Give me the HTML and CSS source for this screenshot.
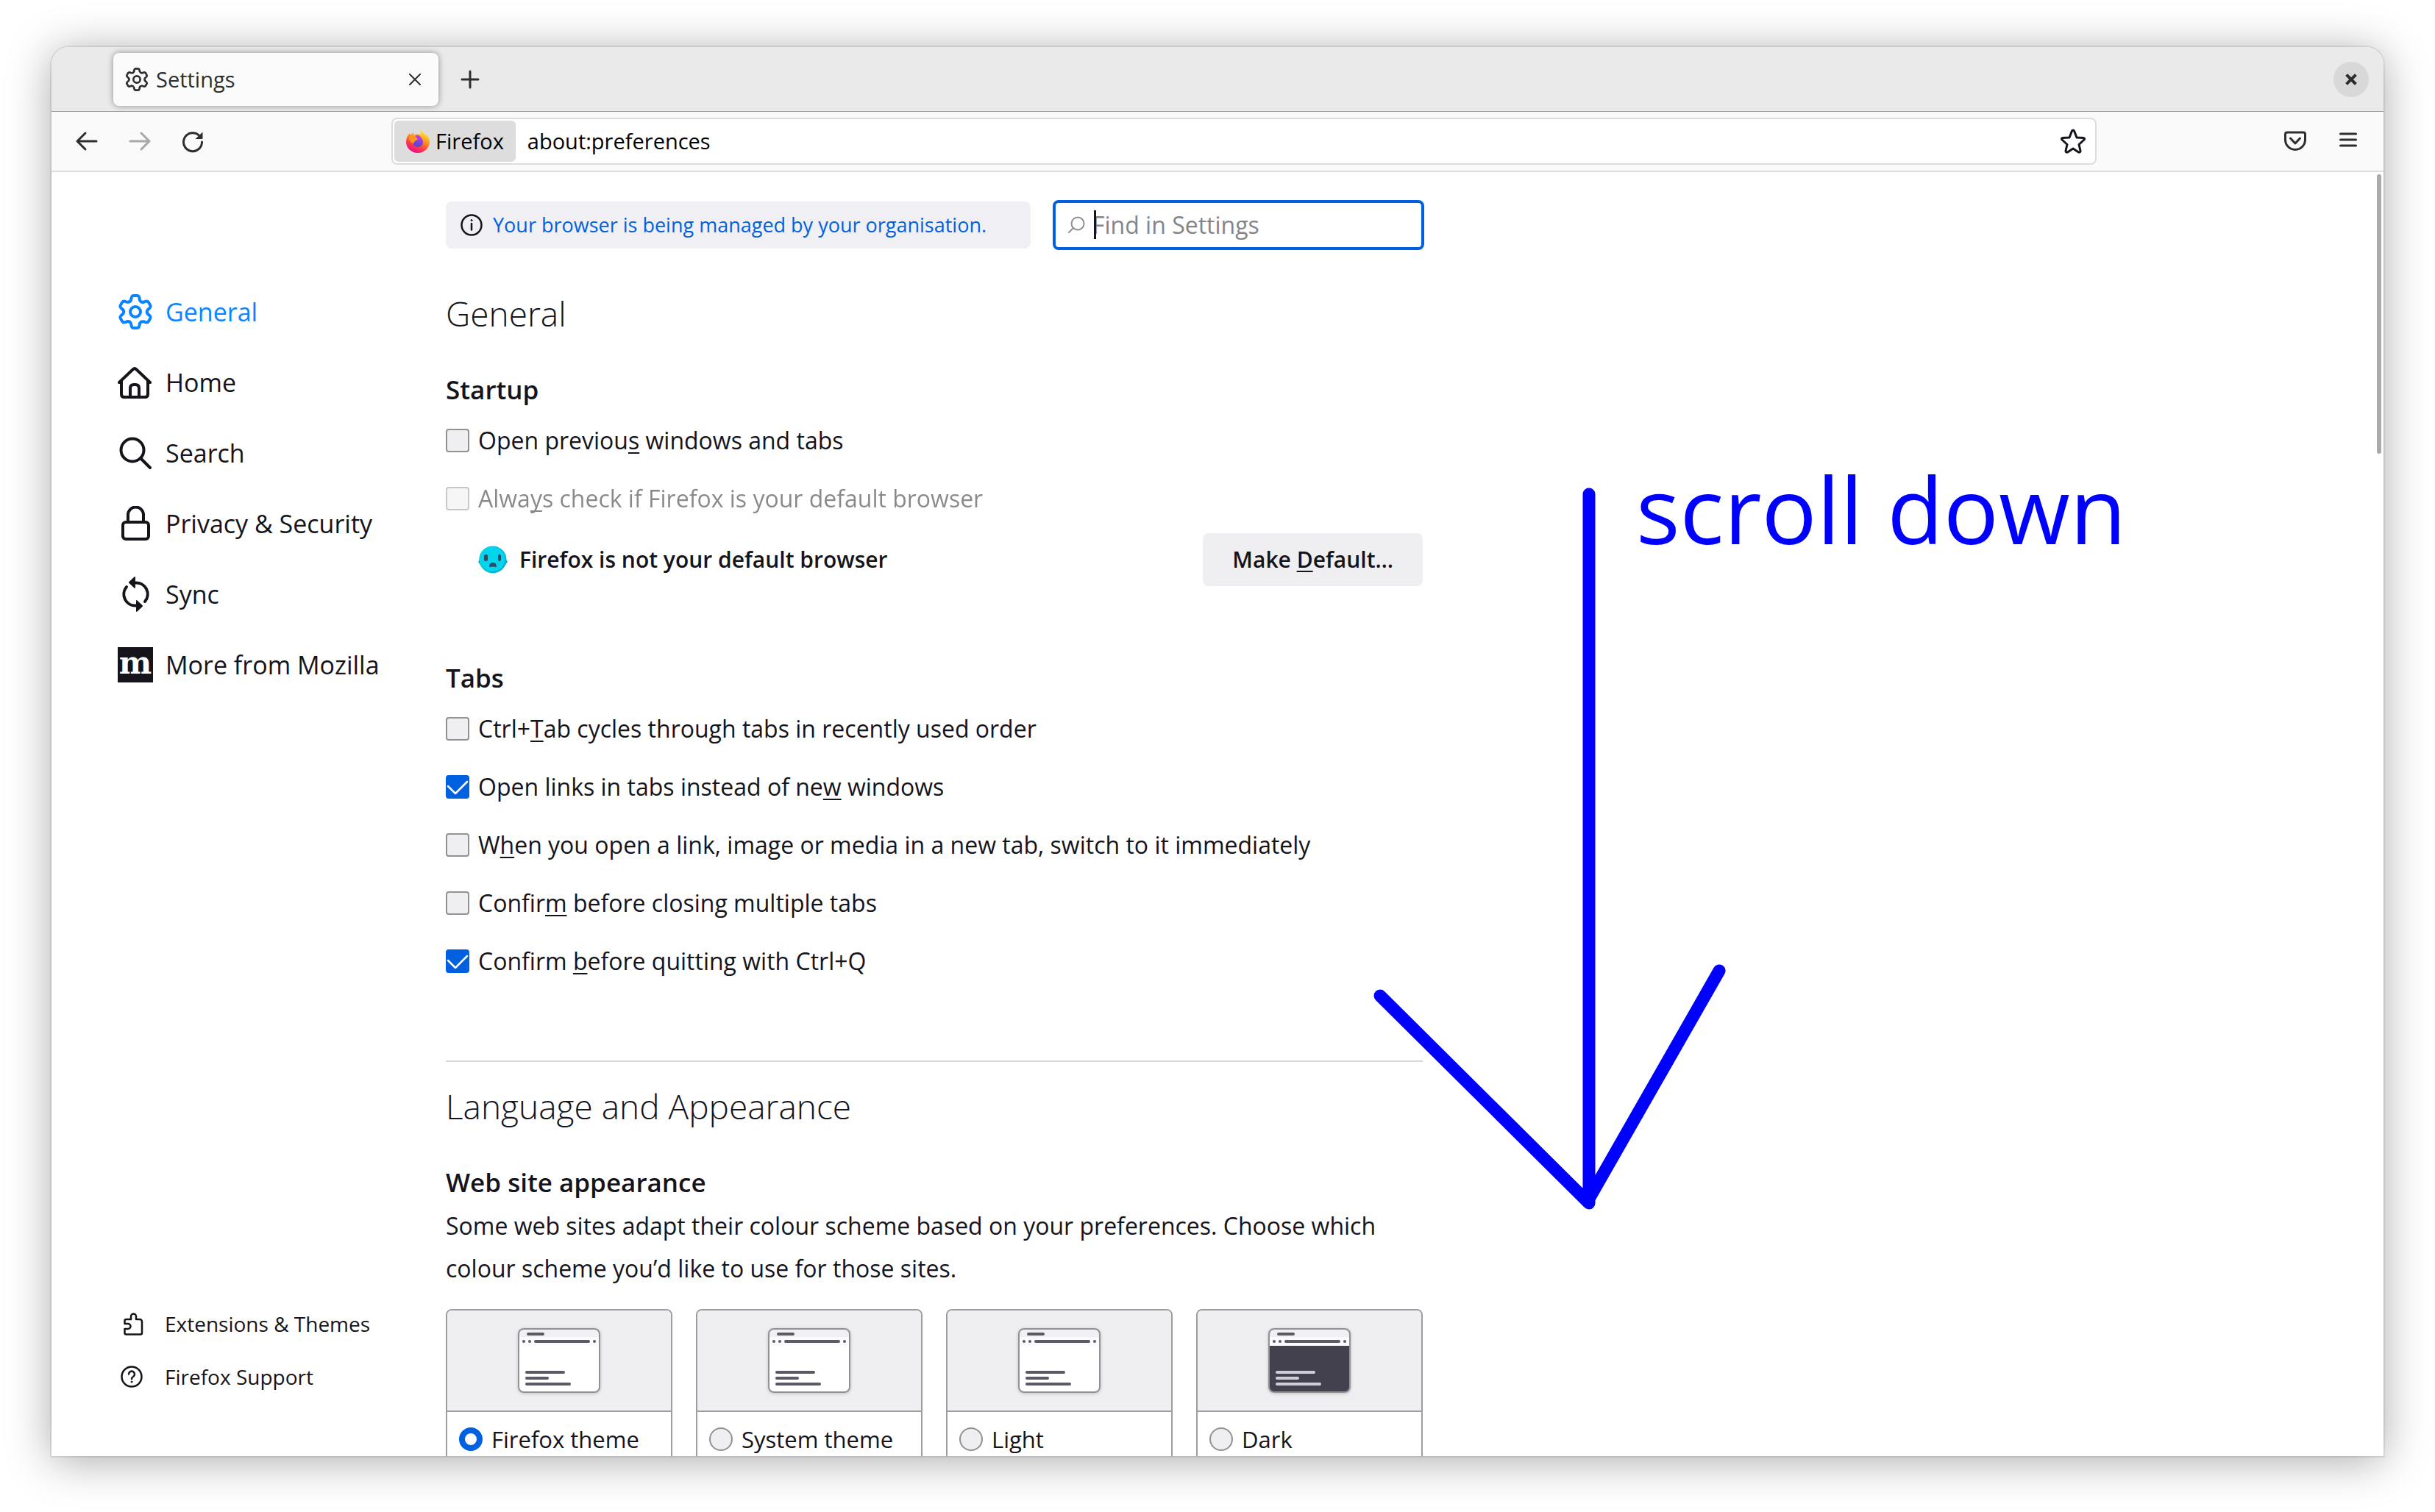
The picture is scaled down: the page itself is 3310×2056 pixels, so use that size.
FILE: index.html
```
<!DOCTYPE html>
<html lang="en-GB">
<head>
<meta charset="utf-8">
<title>Settings</title>
<link rel="stylesheet" href="styles.css">
</head>
<body>
<svg class="defs" aria-hidden="true">
  <defs>
    <path id="tooth" d="M-6-16C-5-19-6-22-2-22H2C6-22 5-19 6-16Q7.500-12.500 10.860-13.200"/>
    <symbol id="gear" viewBox="-24 -24 48 48">
      <g fill="none" stroke="currentColor" stroke-width="4" stroke-linecap="round" stroke-linejoin="round">
        <use href="#tooth"/><use href="#tooth" transform="rotate(60)"/><use href="#tooth" transform="rotate(120)"/>
        <use href="#tooth" transform="rotate(180)"/><use href="#tooth" transform="rotate(240)"/><use href="#tooth" transform="rotate(300)"/>
        <circle r="7"/>
      </g>
    </symbol>
    <symbol id="preview" viewBox="0 0 112 88">
      <rect class="pv-page" x="1" y="1" width="110" height="86" rx="7"/>
      <path d="M2 24V8a6 6 0 0 1 6-6h96a6 6 0 0 1 6 6v16z" fill="#fbfbfe"/>
      <path d="M2 12V8a6 6 0 0 1 6-6h96a6 6 0 0 1 6 6v4z" fill="#f0f0f4"/>
      <g fill="#5b5b66">
        <rect x="12" y="6" width="24" height="4" rx="2"/><rect x="22" y="16" width="76" height="4" rx="2"/>
        <circle cx="8" cy="18" r="2"/><circle cx="16" cy="18" r="2"/><circle cx="104" cy="18" r="2"/>
      </g>
      <g class="pv-text">
        <rect x="10" y="58" width="54" height="4" rx="2"/><rect x="10" y="66" width="32" height="4" rx="2"/><rect x="10" y="74" width="62" height="4" rx="2"/>
      </g>
      <rect x="1" y="1" width="110" height="86" rx="7" fill="none" stroke="#929295" stroke-width="2"/>
    </symbol>
  </defs>
</svg>

<div class="window">
  <header class="tabstrip">
    <div class="tab">
      <svg class="icon-32"><use href="#gear"/></svg>
      <span class="tab-title">Settings</span>
      <button class="plain" aria-label="Close tab">
        <svg width="16" height="16" viewBox="0 0 16 16" fill="none" stroke="currentColor" stroke-width="2" stroke-linecap="round"><path d="M1 1l14 14M15 1L1 15"/></svg>
      </button>
    </div>
    <button class="plain new-tab" aria-label="New tab">
      <svg width="26" height="26" viewBox="0 0 26 26" fill="none" stroke="currentColor" stroke-width="3" stroke-linecap="round"><path d="M13 2v22M2 13h22"/></svg>
    </button>
    <button class="plain close-window" aria-label="Close window">
      <svg width="16" height="16" viewBox="0 0 16 16" fill="none" stroke="currentColor" stroke-width="4" stroke-linecap="square"><path d="M3 3l10 10M13 3L3 13"/></svg>
    </button>
  </header>

  <nav class="toolbar">
    <button class="plain tool" aria-label="Back">
      <svg class="icon-32" viewBox="0 0 32 32" fill="none" stroke="currentColor" stroke-width="3" stroke-linecap="round" stroke-linejoin="round"><path d="M14 5L3 16l11 11M3 16h26"/></svg>
    </button>
    <button class="plain tool" aria-label="Forward" disabled>
      <svg class="icon-32" viewBox="0 0 32 32" fill="none" stroke="currentColor" stroke-width="3" stroke-linecap="round" stroke-linejoin="round"><path d="M18 5l11 11-11 11M29 16H3"/></svg>
    </button>
    <button class="plain tool" aria-label="Reload">
      <svg class="icon-32" viewBox="0 0 32 32" fill="none" stroke="currentColor" stroke-width="3" stroke-linecap="round"><path d="M28.500 17A12.500 12.500 0 1 1 25 8.500"/><path d="M29.500 3.500v8.500a1 1 0 0 1-1 1h-9z" fill="currentColor" stroke="none"/></svg>
    </button>
    <div class="urlbar">
      <div class="identity">
        <svg class="icon-32" viewBox="0 0 32 32">
          <defs>
            <linearGradient id="ff-body" x1=".8" y1="0" x2=".3" y2="1"><stop offset=".1" stop-color="#ffe52e"/><stop offset=".4" stop-color="#ff9a1f"/><stop offset=".7" stop-color="#ff3d4a"/><stop offset="1" stop-color="#e5078b"/></linearGradient>
            <linearGradient id="ff-globe" x1=".7" y1="0" x2=".4" y2="1"><stop offset="0" stop-color="#b13bf0"/><stop offset="1" stop-color="#5048c8"/></linearGradient>
          </defs>
          <path fill="url(#ff-body)" d="M20 0c-1 3-1 4 1 7 0 0-8-2-10 1-1-1-1-3-1-4-2 1-3 3-4 4l-1-3C2 8 0 12 0 17c0 8 7 15 16 15s16-7 16-15c0-4-2-8-4-10l-1 2c-1-4-6-5-7-9z"/>
          <circle cx="16" cy="17" r="7" fill="url(#ff-globe)"/>
          <path fill="#ff9b1c" d="M4 10c3-2 5-2 8 1 2-1 4 0 5 1-1 3-4 2-5 4-1 1-1 2-2 3-3-1-6-4-6-9z"/>
          <path fill="#b13bf0" d="M12 9c3-2 8-1 9 4h-6c0-2-1-3-3-4z"/>
        </svg>
        <span>Firefox</span>
      </div>
      <input class="url" type="text" aria-label="Address" value="about:preferences">
      <button class="plain" aria-label="Bookmark this page">
        <svg width="34" height="34" viewBox="0 0 34 34" fill="none" stroke="#15141a" stroke-width="3" stroke-linejoin="round"><path d="M15.500 3q1.500-2 3 0l3.500 9 9 .5q2.500.5 1 2.500l-7 6.500 2 8.500q0 2.500-2.500 2L17 27l-7.500 5q-2.500.5-2.500-2l2-8.500L2 15q-1.500-2 1-2.500l9-.5z"/></svg>
      </button>
    </div>
    <button class="plain tool" aria-label="Save to Pocket">
      <svg class="icon-32" viewBox="0 0 32 32" fill="none" stroke="currentColor" stroke-width="3" stroke-linecap="round" stroke-linejoin="round"><path d="M5 4h22a2.500 2.500 0 0 1 2.500 2.500V14a13.500 13.500 0 0 1-27 0V6.500A2.500 2.500 0 0 1 5 4zM9.500 12l6.500 7 6.500-7"/></svg>
    </button>
    <button class="plain tool" aria-label="Open application menu">
      <svg class="icon-32" viewBox="0 0 32 32" fill="none" stroke="currentColor" stroke-width="3" stroke-linecap="round"><path d="M5.500 6h21M5.500 14h21M5.500 22h21"/></svg>
    </button>
  </nav>

  <div class="page">
    <aside class="sidebar">
      <ul class="categories">
        <li><a class="selected" href="#general"><svg class="icon-48"><use href="#gear"/></svg>General</a></li>
        <li><a href="#home">
          <svg class="icon-48" viewBox="0 0 48 48" fill="none" stroke="currentColor" stroke-width="4" stroke-linecap="round" stroke-linejoin="round"><path d="M2 24L21 6q2-2 4 0l19 18M5 22v18q0 4 4 4h28q4 0 4-4V22M17 44V32q0-5 5-5h2q5 0 5 5v12"/></svg>Home</a></li>
        <li><a href="#search">
          <svg class="icon-48" viewBox="0 0 48 48" fill="none" stroke="currentColor" stroke-width="4" stroke-linecap="round"><circle cx="20" cy="20" r="15.500"/><path d="M31 31l13 13"/></svg>Search</a></li>
        <li><a href="#privacy">
          <svg class="icon-48" viewBox="0 0 48 48" fill="none" stroke="currentColor" stroke-width="4" stroke-linecap="round"><rect x="7" y="22" width="35" height="23" rx="4"/><path d="M14 22V12a10.500 10.500 0 0 1 21 0v10"/></svg>Privacy &amp; Security</a></li>
        <li><a href="#sync">
          <svg class="icon-48" viewBox="0 0 48 48" fill="none" stroke="currentColor" stroke-width="4" stroke-linecap="round"><path d="M24 8.500A15.500 15.500 0 0 1 37 34M25 39.500A15.500 15.500 0 0 1 12 14"/><path d="M24 1v14q0 1.500-1.500.500l-7-6.500q-1-1 0-2l7-6.500q1.500-1 1.500.500zM25 33v14q0 1.500 1.500.500l7-6.500q1-1 0-2l-7-6.500q-1.500-1-1.500.500z" fill="currentColor" stroke="none"/></svg>Sync</a></li>
        <li><a href="#more"><span class="mozilla" aria-hidden="true">m</span>More from Mozilla</a></li>
      </ul>
      <ul class="shortcuts">
        <li><a href="#addons">
          <svg class="icon-32" viewBox="0 0 32 32" fill="none" stroke="currentColor" stroke-width="2.500" stroke-linejoin="round"><path d="M7.500 10H14V6a3.500 3.500 0 0 1 7 0v4h5a3 3 0 0 1 3 3v15.500a2 2 0 0 1-2 2H7.500a2 2 0 0 1-2-2V23H10a3.500 3.500 0 0 0 0-7H5.500v-4a2 2 0 0 1 2-2z"/></svg>Extensions &amp; Themes</a></li>
        <li><a href="#support">
          <svg class="icon-32" viewBox="0 0 32 32" fill="none" stroke="currentColor" stroke-width="2.500" stroke-linecap="round"><circle cx="15" cy="16" r="13.500"/><path d="M11 12.500a4 4 0 1 1 6 3.500q-2 1-2 3"/><circle cx="15" cy="23" r="1" fill="currentColor" stroke-width="1"/></svg>Firefox Support</a></li>
      </ul>
    </aside>

    <main class="content">
      <div class="topline">
        <div class="policy">
          <svg class="icon-32" viewBox="0 0 32 32" fill="none" stroke="#15141a" stroke-width="2.500" stroke-linecap="round"><circle cx="17" cy="16" r="13.500"/><path d="M17 14v8.500"/><circle cx="17" cy="9.500" r="1" fill="#15141a" stroke-width="1"/></svg>
          <a href="#policies">Your browser is being managed by your organisation.</a>
        </div>
        <div class="search">
          <svg width="24" height="24" viewBox="0 0 24 24" fill="none" stroke="#8f8f94" stroke-width="2" stroke-linecap="round"><circle cx="14" cy="10" r="8.500"/><path d="M8 16l-6 6"/></svg>
          <input type="search" placeholder="Find in Settings" aria-label="Find in Settings">
          <span class="caret"></span>
        </div>
      </div>

      <h1 class="pane-title">General</h1>
      <h2 class="group-title">Startup</h2>
      <div class="options">
        <label><input type="checkbox"><span>Open previou<u>s</u> windows and tabs</span></label>
        <label class="disabled"><input type="checkbox" disabled><span>Alwa<u>y</u>s check if Firefox is your default browser</span></label>
      </div>
      <div class="default-browser">
        <svg width="40" height="38" viewBox="0 0 40 38">
          <path d="M4 17L0 22l6 8zM36 17l4 5-6 8z" fill="#00a5c8"/>
          <circle cx="20" cy="19" r="18.500" fill="#00b3d6"/><ellipse cx="19" cy="18" rx="17.500" ry="17" fill="#00d5ec"/>
          <rect x="8" y="12" width="5" height="9" rx="2" fill="#2e4a66"/><rect x="27" y="12" width="4" height="9" rx="2" fill="#2e4a66"/>
          <path d="M15 29q0-6 5-6t5 6q-5-1-10 0z" fill="#2e4a66"/>
        </svg>
        <strong>Firefox is not your default browser</strong>
        <button class="make-default">Make <u>D</u>efault…</button>
      </div>

      <h2 class="group-title tabs-title">Tabs</h2>
      <div class="options">
        <label><input type="checkbox"><span>Ctrl+<u>T</u>ab cycles through tabs in recently used order</span></label>
        <label><input type="checkbox" checked><span>Open links in tabs instead of ne<u>w</u> windows</span></label>
        <label><input type="checkbox"><span>W<u>h</u>en you open a link, image or media in a new tab, switch to it immediately</span></label>
        <label><input type="checkbox"><span>Confir<u>m</u> before closing multiple tabs</span></label>
        <label><input type="checkbox" checked><span>Confirm <u>b</u>efore quitting with Ctrl+Q</span></label>
      </div>

      <hr>
      <h1 class="pane-title appearance-title">Language and Appearance</h1>
      <h2 class="group-title">Web site appearance</h2>
      <p class="description">Some web sites adapt their colour scheme based on your preferences. Choose which colour scheme you’d like to use for those sites.</p>
      <div class="themes">
        <label class="theme"><span class="preview"><svg><use href="#preview"/></svg></span><span class="choice"><input type="radio" name="theme" checked>Firefox theme</span></label>
        <label class="theme"><span class="preview"><svg><use href="#preview"/></svg></span><span class="choice"><input type="radio" name="theme">System theme</span></label>
        <label class="theme"><span class="preview"><svg><use href="#preview"/></svg></span><span class="choice"><input type="radio" name="theme">Light</span></label>
        <label class="theme dark"><span class="preview"><svg><use href="#preview"/></svg></span><span class="choice"><input type="radio" name="theme">Dark</span></label>
      </div>
    </main>
    <div class="scroll-thumb"></div>
  </div>

  <svg class="arrow" viewBox="0 0 480 986" fill="none" stroke="#00f" stroke-width="17" stroke-linecap="round" stroke-linejoin="round"><path d="M294 10v964M10 692l284 282M471 658L294 968"/></svg>
  <div class="arrow-label">scroll down</div>
</div>
</body>
</html>
```
FILE: styles.css
```
* { box-sizing: border-box; }

body {
  margin: 0;
  height: 100vh;
  padding: 64px 70px 76px;
  background: #fff;
  color: #15141a;
  font: 32px/40px "Open Sans", "Noto Sans", sans-serif;
}

input, button { font: inherit; color: inherit; }
a { color: inherit; text-decoration: none; }
ul { list-style: none; margin: 0; padding: 0; }
svg { flex: none; display: block; }
u { text-decoration-thickness: 2px; text-underline-offset: 4px; text-decoration-skip-ink: none; }

.defs { position: absolute; width: 0; height: 0; }
.icon-32 { width: 32px; height: 32px; }
.icon-48 { width: 48px; height: 48px; }

.plain {
  display: flex;
  align-items: center;
  justify-content: center;
  border: 0;
  padding: 0;
  background: none;
}

.window {
  position: relative;
  display: flex;
  flex-direction: column;
  height: 100%;
  background: #fff;
  border-radius: 24px 24px 0 0;
  box-shadow: 0 0 0 2px rgba(0, 0, 0, .08), 0 6px 60px rgba(0, 0, 0, .34);
}

/* Tab strip */
.tabstrip {
  display: flex;
  align-items: center;
  height: 88px;
  flex: none;
  padding: 0 20px 0 84px;
  border-bottom: 1px solid #999;
  border-radius: 24px 24px 0 0;
  background: #eaeaea;
  color: #2e2e2e;
  font-size: 29px;
}
.tab {
  display: flex;
  align-items: center;
  gap: 10px;
  width: 442px;
  height: 72px;
  padding: 0 24px 0 16px;
  border-radius: 8px;
  background: #fbfbfb;
  box-shadow: 0 0 8px rgba(0, 0, 0, .4);
}
.tab-title { flex: 1; }
.new-tab { width: 48px; height: 48px; margin-left: 19px; }
.close-window {
  width: 48px;
  height: 48px;
  margin-left: auto;
  border-radius: 50%;
  background: #d8d8d8;
}

/* Navigation toolbar */
.toolbar {
  display: flex;
  align-items: center;
  height: 82px;
  flex: none;
  padding: 0 12px;
  border-bottom: 2px solid #ddd;
  background: #fafafa;
  color: #2e2e2e;
}
.tool { width: 72px; height: 64px; }
.tool:disabled { color: #a8a8a8; }
.urlbar {
  display: flex;
  flex: 1;
  align-items: center;
  height: 64px;
  margin: 0 234px;
  padding: 0 13px 0 2px;
  border: 2px solid #ddd;
  border-radius: 8px;
  background: #fff;
  color: #000;
  font-size: 29px;
}
.identity {
  display: flex;
  align-items: center;
  gap: 8px;
  height: 56px;
  padding: 0 16px;
  border-radius: 6px;
  background: #ddd;
}
.url { flex: 1; border: 0; padding: 0 16px; background: none; outline: 0; }

/* Settings page */
.page {
  position: relative;
  display: flex;
  flex: 1;
  min-height: 0;
  overflow: hidden;
}
.scroll-thumb {
  position: absolute;
  top: 3px;
  right: 3px;
  width: 6px;
  height: 380px;
  border-radius: 3px;
  background: #aaa;
}

.sidebar {
  display: flex;
  flex-direction: column;
  justify-content: space-between;
  width: 536px;
  flex: none;
  padding: 142px 0 72px 90px;
}
.categories a {
  display: flex;
  align-items: center;
  gap: 17px;
  height: 96px;
  font-size: 34px;
}
.categories .selected { color: #0a84ff; }
.mozilla {
  width: 48px;
  height: 48px;
  background: #15141a;
  color: #fff;
  font: bold 42px/44px "DejaVu Serif", serif;
  text-align: center;
}
.shortcuts a {
  display: flex;
  align-items: center;
  gap: 28px;
  height: 72px;
  padding-left: 4px;
  font-size: 28px;
}

.content { width: 1328px; flex: none; padding-top: 38px; }

.topline {
  display: flex;
  align-items: center;
  gap: 30px;
  margin-right: -2px;
}
.policy {
  display: flex;
  flex: 1;
  align-items: center;
  gap: 14px;
  height: 64px;
  padding: 0 18px;
  border-radius: 8px;
  background: #f0f0f4;
  color: #0061e0;
  font-size: 27px;
}
.search {
  position: relative;
  display: flex;
  align-items: center;
  gap: 10px;
  width: 505px;
  height: 68px;
  padding: 0 16px;
  border: 4px solid #0061e0;
  border-radius: 8px;
}
.search input { flex: 1; min-width: 0; border: 0; padding: 0; background: none; outline: 0; }
.search input::placeholder { color: #858588; opacity: 1; }
.caret {
  position: absolute;
  left: 52px;
  top: 10px;
  width: 3px;
  height: 39px;
  background: #15141a;
}

.pane-title { margin: 54px 0 0; font-size: 46px; font-weight: 300; line-height: 64px; }
.group-title { margin: 48px 0 0; font-size: 35px; font-weight: 600; line-height: 48px; }
.tabs-title { margin-top: 101px; }
.appearance-title { margin-top: 28px; }

.options { display: grid; gap: 39px; margin-top: 25px; }
.options label { display: flex; align-items: center; gap: 12px; }
.options .disabled { opacity: .5; }

input[type="checkbox"], input[type="radio"] {
  flex: none;
  width: 32px;
  height: 32px;
  margin: 0;
  appearance: none;
  border: 2px solid #929295;
  background: #efeff1;
}
input[type="checkbox"] { border-radius: 4px; }
input[type="checkbox"]:checked {
  border: 0;
  background: #0061e0 url("data:image/svg+xml,%3Csvg xmlns='http://www.w3.org/2000/svg' viewBox='0 0 32 32' fill='none' stroke='%23fff' stroke-width='2.5' stroke-linecap='round' stroke-linejoin='round'%3E%3Cpath d='M3 15l10 10L29 9'/%3E%3C/svg%3E");
}
input[type="radio"] { border-radius: 50%; }
input[type="radio"]:checked { border: 8px solid #0061e0; background: #fbfbfe; }

.default-browser {
  display: flex;
  align-items: center;
  gap: 16px;
  margin-top: 27px;
  padding-left: 44px;
  font-size: 30px;
}
.default-browser strong { flex: 1; font-weight: 600; }
.make-default {
  height: 72px;
  padding: 0 40px;
  border: 0;
  border-radius: 8px;
  background: #efeff1;
  font-weight: 600;
}

hr { height: 2px; margin: 115px 0 0; border: 0; background: #d7d7db; }

.description { margin: 6px 0 0; padding-right: 48px; line-height: 58px; }

.themes {
  display: grid;
  grid-template-columns: repeat(4, 1fr);
  gap: 32px;
  margin-top: 26px;
  font-size: 31px;
}
.theme { border: 2px solid #9e9ea0; border-radius: 8px; overflow: hidden; }
.preview {
  display: flex;
  align-items: center;
  justify-content: center;
  height: 138px;
  border-bottom: 2px solid #9e9ea0;
  background: #efeff1;
}
.preview svg { width: 112px; height: 88px; filter: drop-shadow(0 1px 2px rgba(0, 0, 0, .2)); }
.pv-page { fill: var(--page, #fff); }
.pv-text { fill: var(--text, #5b5b66); }
.dark { --page: #42414d; --text: #cfcfd8; }
.choice { display: flex; align-items: center; gap: 12px; height: 74px; padding: 0 16px; }

/* Annotation drawn over the window */
.arrow { position: absolute; left: 1796px; top: 598px; width: 480px; height: 986px; }
.arrow-label {
  position: absolute;
  left: 2154px;
  top: 566px;
  color: #00f;
  font-size: 125px;
  line-height: 124px;
  white-space: nowrap;
}
```
